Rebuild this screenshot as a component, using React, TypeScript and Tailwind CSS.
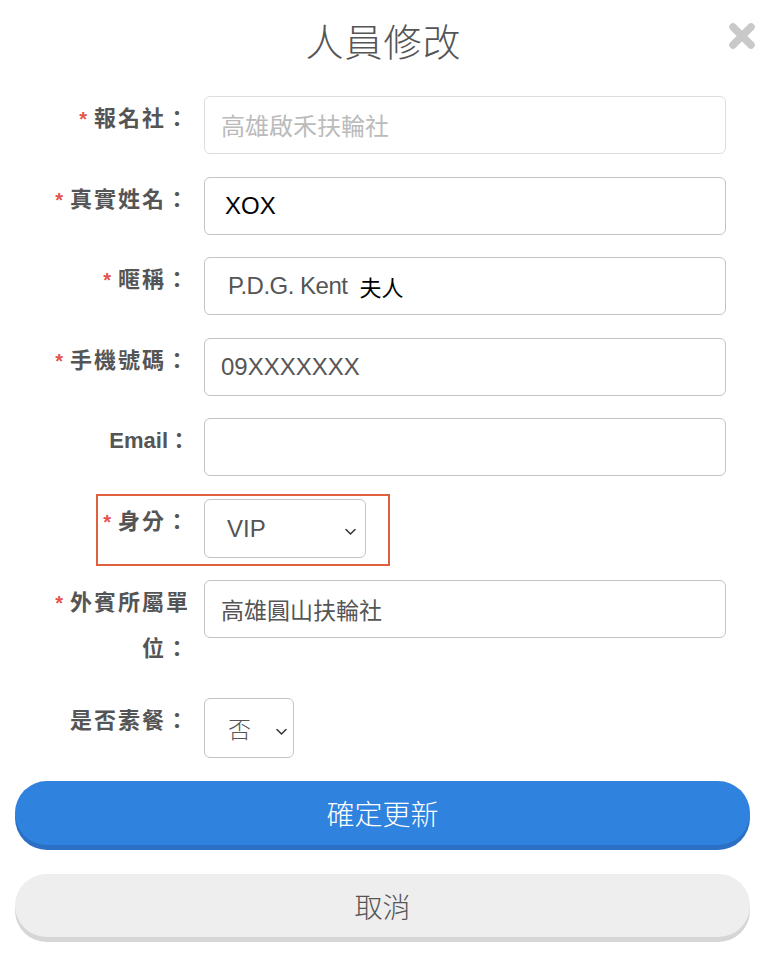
import React from "react";

const labelFont = {
  fontFamily: '"Liberation Sans", "Noto Sans CJK TC", sans-serif',
};

function Label({ req, text, latin }: { req?: boolean; text: string; latin?: boolean }) {
  return (
    <div
      className={`w-[160px] shrink-0 text-right font-bold leading-[45px] text-[#555] ${latin ? "text-[22px] tracking-[0px]" : "text-[22px] tracking-[2px]"}`}
      style={labelFont}
    >
      {req && <span className="text-[#e5534b] mr-[5px] text-[20px]">*</span>}
      {text}
    </div>
  );
}

function Chevron() {
  return (
    <svg width="11" height="7" viewBox="0 0 11 7" className="absolute top-1/2 -translate-y-1/2">
      <path d="M1 1 L5.5 5.5 L10 1" fill="none" stroke="#333" strokeWidth="1.5" strokeLinecap="round" strokeLinejoin="round" />
    </svg>
  );
}

export default function App() {
  const box =
    "h-[58px] w-[522px] rounded-[6px] border border-[#c4c4c4] bg-white flex items-center text-[24px] text-[#555]";
  const font = { fontFamily: '"Liberation Sans", "Noto Sans CJK TC", sans-serif' };
  const cjk = { fontFamily: '"Noto Sans CJK TC", sans-serif' };
  return (
    <div className="w-[767px] min-h-[957px] bg-white relative" style={font}>
      {/* Title */}
      <div className="h-[96px] pt-[13px] text-center">
        <h1 className="text-[38px] font-light text-[#555] leading-[54px] tracking-[1px]" style={cjk}>
          人員修改
        </h1>
      </div>
      <button className="absolute left-[728px] top-[22px] w-[28px] h-[28px]" aria-label="close">
        <svg width="28" height="28" viewBox="0 0 28 28">
          <path d="M5 5 L23 23 M23 5 L5 23" stroke="#c9c9c9" strokeWidth="7.5" strokeLinecap="round" />
        </svg>
      </button>

      <div className="pl-[30px]">
        {/* 報名社 */}
        <div className="flex gap-[14px] mb-[23px]">
          <Label req text="報名社：" />
          <div className={`${box} bg-[#fafafa] border-[#dedede] pl-[16px] text-[#bbb]`} style={cjk}>高雄啟禾扶輪社</div>
        </div>
        {/* 真實姓名 */}
        <div className="flex gap-[14px] mb-[22px]">
          <Label req text="真實姓名：" />
          <div className={`${box} pl-[20px] text-black`}>XOX</div>
        </div>
        {/* 暱稱 */}
        <div className="flex gap-[14px] mb-[23px]">
          <Label req text="暱稱：" />
          <div className={`${box} pl-[23px]`}>
            <span className="tracking-[-0.5px]">P.D.G. Kent</span>
            <span className="ml-[12px] text-black text-[22px]" style={cjk}>夫人</span>
          </div>
        </div>
        {/* 手機號碼 */}
        <div className="flex gap-[14px] mb-[22px]">
          <Label req text="手機號碼：" />
          <div className={`${box} pl-[16px]`}>09XXXXXXX</div>
        </div>
        {/* Email */}
        <div className="flex gap-[14px] mb-[23px]">
          <Label latin text="Email：" />
          <div className={box}></div>
        </div>
        {/* 身分 */}
        <div className="flex gap-[14px] mb-[22px] relative">
          <Label req text="身分：" />
          <div className="relative h-[59px] w-[162px] rounded-[6px] border border-[#c4c4c4] bg-white flex items-center pl-[22px] text-[24px] text-[#555]">
            VIP
            <span className="absolute right-[9px] top-1/2 w-[11px] h-[7px]">
              <Chevron />
            </span>
          </div>
          <div className="absolute left-[66px] top-[-5px] w-[294px] h-[72px] border-2 border-[#e0603d] pointer-events-none"></div>
        </div>
        {/* 外賓所屬單位 */}
        <div className="flex gap-[14px] mb-[27px]">
          <Label req text="外賓所屬單位：" />
          <div className={`${box} pl-[16px]`} style={{ ...cjk, fontSize: 23 }}>高雄圓山扶輪社</div>
        </div>
        {/* 是否素餐 */}
        <div className="flex gap-[14px]">
          <Label text="是否素餐：" />
          <div className="relative h-[60px] w-[90px] rounded-[6px] border border-[#c4c4c4] bg-white flex items-center pl-[23px] text-[23px] text-[#555]" style={{ ...cjk, fontWeight: 300 }}>
            否
            <span className="absolute right-[6px] top-1/2 w-[11px] h-[7px]">
              <Chevron />
            </span>
          </div>
        </div>
      </div>

      {/* Buttons */}
      <div className="pl-[15px] pr-[17px] mt-[23px] flex flex-col gap-[29px]">
        <button
          className="h-[64px] w-full rounded-full bg-[#2f82de] text-white text-[28px] shadow-[0_5px_0_#2b70c4]"
          style={{ ...cjk, fontWeight: 300 }}
        >
          確定更新
        </button>
        <button
          className="h-[63px] w-full rounded-full bg-[#eeeeee] text-[#555] text-[28px] shadow-[0_5px_0_#d6d6d6]"
          style={{ ...cjk, fontWeight: 300 }}
        >
          取消
        </button>
      </div>
    </div>
  );
}
